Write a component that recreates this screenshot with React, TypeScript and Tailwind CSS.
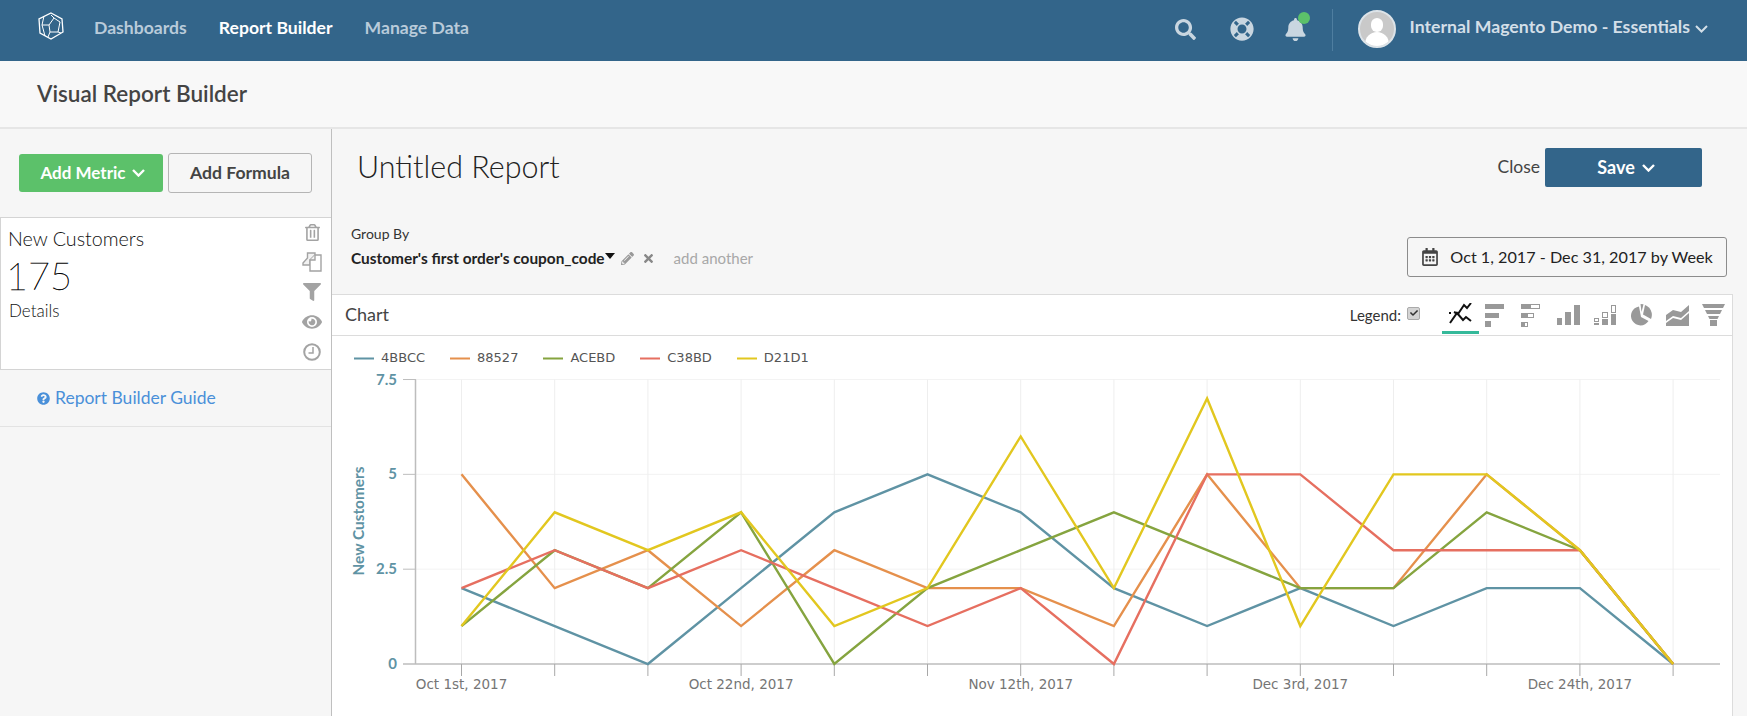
import { FaBell, FaCheck, FaEye, FaFilter, FaLifeRing, FaPencilAlt, FaQuestionCircle, FaRegCalendarAlt, FaRegTrashAlt, FaSearch, FaTimes } from 'react-icons/fa';

const seriesList = [
  { name: '4BBCC', color: '#5f93a4', values: [2, 1, 0, 2, 4, 5, 4, 2, 1, 2, 1, 2, 2, 0] },
  { name: '88527', color: '#e5904c', values: [5, 2, 3, 1, 3, 2, 2, 1, 5, 2, 2, 5, 3, 0] },
  { name: 'ACEBD', color: '#85a43f', values: [1, 3, 2, 4, 0, 2, 3, 4, 3, 2, 2, 4, 3, 0] },
  { name: 'C38BD', color: '#e66f60', values: [2, 3, 2, 3, 2, 1, 2, 0, 5, 5, 3, 3, 3, 0] },
  { name: 'D21D1', color: '#e2c71f', values: [1, 4, 3, 4, 1, 2, 6, 2, 7, 1, 5, 5, 3, 0] },
];

const xLabels = [
  { i: 0, text: 'Oct 1st, 2017' },
  { i: 3, text: 'Oct 22nd, 2017' },
  { i: 6, text: 'Nov 12th, 2017' },
  { i: 9, text: 'Dec 3rd, 2017' },
  { i: 12, text: 'Dec 24th, 2017' },
];

function Logo() {
  return (
    <svg width="26" height="28" viewBox="0 0 26 28" fill="none" stroke="#fff" strokeWidth="1" className="mb-[9px]">
      <path d="M13 1 L24 7 L25 20 L13 27 L2 21 L1 7 Z" strokeWidth="1.3" />
      <path d="M6 4 L4 13 L11 13 L16 6 L22 10 L20 20 L12 20 L11 13 M4 13 L7 24 M12 20 L10 25 M20 20 L23 21 M16 6 L13 3" />
    </svg>
  );
}

function Chevron({ stroke, width }: { stroke: string; width: number }) {
  return (
    <svg width="13" height="8" viewBox="0 0 13 8" fill="none" stroke={stroke} strokeWidth={width}>
      <path d="M1 1 L6.5 6.5 L12 1" />
    </svg>
  );
}

function LineIcon() {
  return (
    <svg width="23" height="21" viewBox="0 0 23 21" fill="none" stroke="#111" strokeWidth="2">
      <path d="M0 10 H2 M5 9 L9 11 L15 2 L18 5 L22 0" />
      <path d="M1 20 L8 10 L14 17 L17 14 L22 18" />
    </svg>
  );
}

function BarsIcon() {
  return (
    <svg width="19" height="23" viewBox="0 0 19 23" fill="#999" className="ml-[6px]">
      <rect x="0" y="0" width="19" height="5" />
      <rect x="0" y="9" width="14" height="5" />
      <rect x="0" y="17" width="6" height="6" />
    </svg>
  );
}

function StackedBarsIcon() {
  return (
    <svg width="19" height="23" viewBox="0 0 19 23" className="ml-[17px]">
      <rect x="0" y="0" width="9" height="5" fill="#999" />
      <rect x="9.5" y="0.5" width="9" height="4" fill="#fff" stroke="#999" />
      <rect x="0" y="9" width="6" height="5" fill="#999" />
      <rect x="6.5" y="9.5" width="6" height="4" fill="#fff" stroke="#999" />
      <rect x="0" y="18" width="3" height="5" fill="#999" />
      <rect x="3.5" y="18.5" width="3" height="4" fill="#fff" stroke="#999" />
    </svg>
  );
}

function ColumnsIcon() {
  return (
    <svg width="23" height="20" viewBox="0 0 23 20" fill="#999" className="ml-[17px]">
      <rect x="0" y="13" width="5" height="7" />
      <rect x="8" y="7" width="6" height="13" />
      <rect x="17" y="0" width="6" height="20" />
    </svg>
  );
}

function StackedColumnsIcon() {
  return (
    <svg width="22" height="20" viewBox="0 0 22 20" className="ml-[14px]">
      <rect x="0.5" y="13.5" width="4" height="3" fill="#fff" stroke="#999" />
      <rect x="0" y="18" width="5" height="2" fill="#999" />
      <rect x="8.5" y="7.5" width="5" height="5" fill="#fff" stroke="#999" />
      <rect x="8" y="14" width="6" height="6" fill="#999" />
      <rect x="17.5" y="0.5" width="4" height="7" fill="#fff" stroke="#999" />
      <rect x="17" y="9" width="5" height="11" fill="#999" />
    </svg>
  );
}

function PieIcon() {
  return (
    <svg width="21" height="22" viewBox="0 0 21 22" fill="#999" className="ml-[15px]">
      <path d="M8 2.5 A9.5 9.5 0 1 0 17.5 17 L10 13 Z" />
      <path d="M9.5 0 L12.5 0.3 L10.5 8 Z" />
      <path d="M14 1 A10.5 10.5 0 0 1 20 15 L12 10.5 Z" />
    </svg>
  );
}

function AreaIcon() {
  return (
    <svg width="23" height="21" viewBox="0 0 23 21" fill="#999" className="ml-[14px]">
      <path d="M0 10 L7 5 L15 7 L23 0 L23 6 L15 13 L7 11 L0 16 Z" />
      <path d="M0 18 L7 13 L15 15 L23 8 L23 21 L0 21 Z" />
    </svg>
  );
}

function FunnelIcon() {
  return (
    <svg width="23" height="22" viewBox="0 0 23 22" fill="#999" className="ml-[13px]">
      <path d="M0 0 H23 L21 4 H2 Z" />
      <path d="M3 6 H20 L18 10 H5 Z" />
      <path d="M6 12 H17 L15.5 15 H7.5 Z" />
      <rect x="8" y="16" width="7" height="6" />
    </svg>
  );
}

function CopyIcon() {
  return (
    <svg width="20" height="20" viewBox="0 0 20 20" fill="#f2f2f2" stroke="#a3a3a3" strokeWidth="1.4">
      <path d="M1 11 L5.5 6 L5.5 1 L11 1 L13 1 L13 8 L8 8 L8 13 L1 13 Z" />
      <path d="M8 8 L13 3 L19 3 L19 19 L8 19 Z" fill="#fff" />
      <path d="M13 3 L13 8 L8 8" />
    </svg>
  );
}

function ClockIcon() {
  return (
    <svg width="18" height="18" viewBox="0 0 18 18" fill="none" stroke="#a3a3a3" strokeWidth="2">
      <circle cx="9" cy="9" r="7.8" />
      <path d="M10 4 V10 H5.5" strokeWidth="1.5" />
    </svg>
  );
}

function Chart() {
  const xAt = (i: number) => 129.5 + i * 93.2;
  const yAt = (v: number) => 328 - v * 37.93;

  return (
    <svg width="1400" height="380" viewBox="0 0 1400 380" className="block">
      {/* grid */}
      {[2.5, 5, 7.5].map((v) => (
        <line key={v} x1="83" x2="1388" y1={yAt(v)} y2={yAt(v)} stroke="#f3f3f3" />
      ))}
      {seriesList[0].values.map((_, i) => (
        <line key={i} x1={xAt(i)} x2={xAt(i)} y1={yAt(7.5)} y2={yAt(0)} stroke="#eeeeee" />
      ))}
      {/* axes */}
      <line x1="83.5" x2="83.5" y1={yAt(7.5)} y2={yAt(0)} stroke="#bdbdbd" strokeWidth="1.5" />
      {[2.5, 5, 7.5].map((v) => (
        <line key={v} x1="71" x2="84" y1={yAt(v)} y2={yAt(v)} stroke="#bdbdbd" />
      ))}
      <line x1="71" x2="1388" y1={yAt(0)} y2={yAt(0)} stroke="#bdbdbd" strokeWidth="1.5" />
      {seriesList[0].values.map((_, i) => (
        <line key={i} x1={xAt(i)} x2={xAt(i)} y1={yAt(0)} y2={yAt(0) + 12} stroke="#a8a8a8" />
      ))}
      {/* y labels */}
      {[0, 2.5, 5, 7.5].map((v) => (
        <text key={v} x="65" y={yAt(v) + 5} textAnchor="end" fill="#5f93a4" fontSize="15" fontWeight="700" fontFamily="Lato, sans-serif">
          {v}
        </text>
      ))}
      <text transform="translate(32 185) rotate(-90)" textAnchor="middle" fill="#5f93a4" fontSize="15.4" fontWeight="700" fontFamily="Lato, sans-serif">
        New Customers
      </text>
      {/* x labels */}
      {xLabels.map((l) => (
        <text key={l.i} x={xAt(l.i)} y={yAt(0) + 25} textAnchor="middle" fill="#757575" fontSize="13.5" fontFamily="'DejaVu Sans', sans-serif">
          {l.text}
        </text>
      ))}
      {/* series */}
      {seriesList.map((s) => (
        <polyline
          key={s.name}
          fill="none"
          stroke={s.color}
          strokeWidth="2.4"
          points={s.values.map((v, i) => `${xAt(i)},${yAt(v)}`).join(' ')}
        />
      ))}
    </svg>
  );
}

export default function App() {
  return (
    <div className="flex h-[716px] w-[1747px] flex-col overflow-hidden bg-[#f6f6f6] font-['Lato',sans-serif] text-[#333]">
      {/* top nav */}
      <header className="flex h-[61px] shrink-0 items-center bg-[#33658a] pl-[38px] pr-[39px]">
        <Logo />
        <nav className="mb-[4px] ml-[30px] flex items-center gap-[32px] text-[17.6px] font-bold">
          <span className="text-[#b9cbda]">Dashboards</span>
          <span className="text-white">Report Builder</span>
          <span className="text-[#b9cbda]">Manage Data</span>
        </nav>
        <div className="ml-auto flex items-center text-[#c9d6e0]">
          <FaSearch className="mb-[3px] text-[21px]" />
          <FaLifeRing className="mb-[3px] ml-[34px] text-[24px]" />
          <div className="relative mb-[3px] ml-[30px]">
            <FaBell className="text-[23px]" />
            <span className="absolute right-[-3px] top-[-6px] h-[12px] w-[12px] rounded-full bg-[#5cc16a]" />
          </div>
          <div className="mb-[1px] ml-[25px] h-[42px] w-px bg-[#4f7ea0]" />
          <div className="relative mb-[3px] ml-[25px] h-[38px] w-[38px] overflow-hidden rounded-full border-2 border-[#dce3e8] bg-[#c9c9c9]">
            <span className="absolute left-[11px] top-[6px] h-[14px] w-[12px] rounded-full bg-white" />
            <span className="absolute left-[5px] top-[20px] h-[18px] w-[24px] rounded-t-full bg-white" />
          </div>
          <span className="mb-[6px] ml-[14px] text-[17.7px] font-bold text-[#d3dfe8]">Internal Magento Demo - Essentials</span>
          <div className="mb-[3px] ml-[5px]">
            <Chevron stroke="#d3dfe8" width={2} />
          </div>
        </div>
      </header>

      {/* page title */}
      <div className="flex h-[68px] shrink-0 items-center border-b-2 border-[#e6e6e6] bg-[#f8f8f8] pl-[37px]">
        <h1 className="text-[22.5px] font-semibold text-[#444]">Visual Report Builder</h1>
      </div>

      <div className="flex min-h-0 flex-1">
        {/* sidebar */}
        <aside className="w-[332px] shrink-0 border-r border-[#bfbfbf]">
          <div className="flex gap-[5px] pl-[19px] pt-[25px]">
            <button className="flex h-[38px] w-[144px] items-center justify-center gap-[6px] rounded-[3px] bg-[#5cc16a] pl-[3px] text-[17px] font-bold text-white">
              Add Metric
              <Chevron stroke="#fff" width={2.4} />
            </button>
            <button className="h-[40px] w-[144px] -translate-y-px rounded-[3px] border border-[#b5b5b5] text-[17.6px] font-bold text-[#444]">
              Add Formula
            </button>
          </div>
          <div className="relative mt-[23px] h-[153px] border border-[#d4d4d4] border-r-0 bg-white pl-[7px] pt-[10px] text-[#111]">
            <div className="text-[19.7px] font-light leading-[22px]">New Customers</div>
            <div className="-ml-[2px] mt-[3px] text-[38px] font-thin leading-[44px] text-black [-webkit-text-stroke:0.4px_#000]">175</div>
            <div className="ml-[1px] mt-[3px] text-[17px] font-light leading-[22px]">Details</div>
            <div className="absolute right-[9px] -top-px flex w-[20px] flex-col items-center text-[#a3a3a3]">
              <div className="flex h-[30px] items-center"><FaRegTrashAlt className="text-[17px]" /></div>
              <div className="flex h-[30px] items-center"><CopyIcon /></div>
              <div className="flex h-[30px] items-center"><FaFilter className="text-[18px]" /></div>
              <div className="flex h-[30px] items-center"><FaEye className="text-[20px]" /></div>
              <div className="flex h-[30px] items-center"><ClockIcon /></div>
            </div>
          </div>
          <div className="flex h-[57px] items-center gap-[5px] border-b border-[#e3e3e3] pl-[37px] text-[17.5px] text-[#4a90d9]">
            <FaQuestionCircle className="text-[13px]" />
            Report Builder Guide
          </div>
        </aside>

        {/* main */}
        <main className="flex min-w-0 flex-1 flex-col">
          <div className="flex items-start justify-between pl-[25px] pr-[45px] pt-[19px]">
            <h2 className="-mt-px text-[30.5px] font-light leading-[38px] text-[#222]">Untitled Report</h2>
            <div className="flex items-center gap-[5px]">
              <span className="text-[17.5px] text-[#444]">Close</span>
              <button className="flex h-[39px] w-[157px] items-center justify-center gap-[7px] rounded-[2px] bg-[#33658a] pl-[5px] text-[18px] font-bold text-white">
                Save
                <Chevron stroke="#fff" width={2.4} />
              </button>
            </div>
          </div>

          <div className="flex h-[107px] shrink-0 items-start justify-between pl-[19px] pr-[20px] pt-[38px]">
            <div>
              <div className="text-[14px] leading-[18px] text-[#333]">Group By</div>
              <div className="mt-[5px] flex items-center text-[15.4px] leading-[20px]">
                <span className="font-bold text-[#222]">Customer's first order's coupon_code</span>
                <svg width="10" height="6" viewBox="0 0 10 6" fill="#111" className="mb-[5px]">
                  <path d="M0 0 H10 L5 6 Z" />
                </svg>
                <FaPencilAlt className="ml-[6px] text-[13px] text-[#999]" />
                <FaTimes className="ml-[8px] text-[13px] text-[#888]" />
                <span className="ml-[19px] text-[15px] text-[#a8a8a8]">add another</span>
              </div>
            </div>
            <button className="mt-[12px] flex h-[40px] w-[320px] items-center justify-center gap-[11px] whitespace-nowrap rounded-[3px] border border-[#8c8c8c] text-[16.2px] text-[#222]">
              <FaRegCalendarAlt className="text-[18px] text-[#444]" />
              Oct 1, 2017 - Dec 31, 2017 by Week
            </button>
          </div>

          {/* chart panel */}
          <section className="mr-[14px] min-h-0 flex-1 border-r border-t border-[#dcdcdc] bg-white">
            <div className="flex h-[41px] items-center border-b border-[#dcdcdc] pl-[13px] pr-[7px]">
              <span className="mb-[2px] text-[18px] text-[#444]">Chart</span>
              <div className="ml-auto flex items-center text-[15px] text-[#333]">
                Legend:
                <span className="mb-[4px] ml-[6px] flex h-[13px] w-[13px] items-center justify-center rounded-[2px] border border-[#aaa] bg-[#d4d4d4] text-[#333]">
                  <FaCheck className="text-[8px]" />
                </span>
                <div className="ml-[22px] flex h-[37px] w-[37px] items-center justify-center border-b-[3px] border-[#35b99a]">
                  <LineIcon />
                </div>
                <BarsIcon />
                <StackedBarsIcon />
                <ColumnsIcon />
                <StackedColumnsIcon />
                <PieIcon />
                <AreaIcon />
                <FunnelIcon />
              </div>
            </div>
            <div className="relative">
              <div className="absolute left-[22px] top-[14px] flex gap-[25px] font-['DejaVu_Sans',sans-serif] text-[13px] leading-[16px] text-[#555]">
                {seriesList.map((s) => (
                  <div key={s.name} className="flex items-center gap-[7px]">
                    <svg width="20" height="3" className="block">
                      <rect width="20" height="2" y="0.5" fill={s.color} />
                    </svg>
                    {s.name}
                  </div>
                ))}
              </div>
              <Chart />
            </div>
          </section>
        </main>
      </div>
    </div>
  );
}
